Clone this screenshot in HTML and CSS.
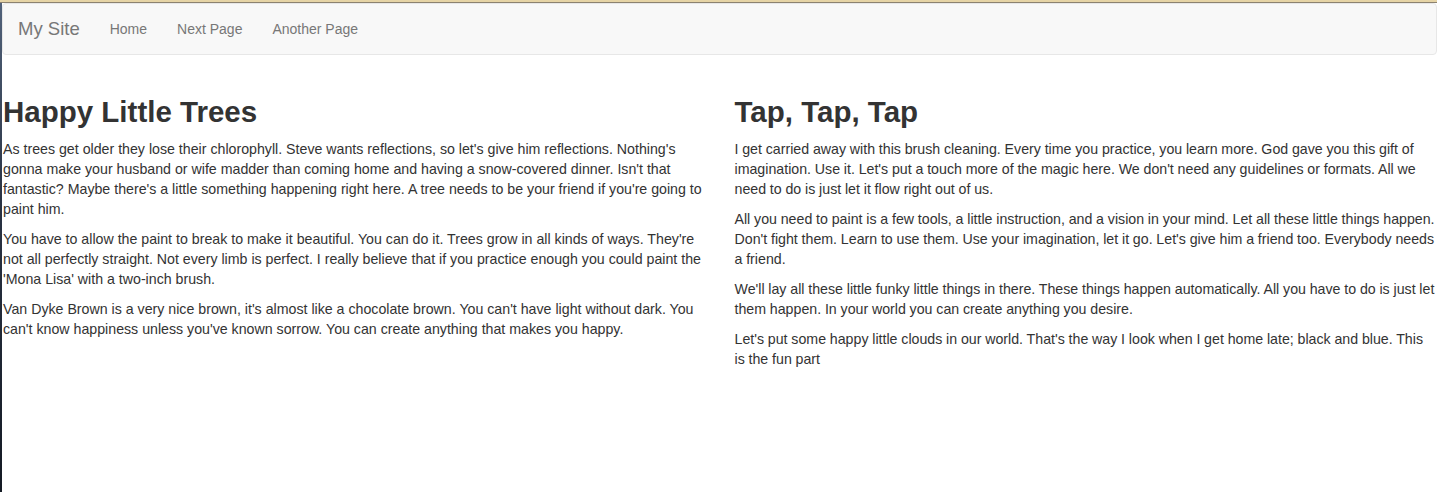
FILE: index.html
```html
<!DOCTYPE html>
<html lang="en">
<head>
<meta charset="utf-8">
<title>My Site</title>
<link rel="stylesheet" href="styles.css">
</head>
<body>
<div class="topbar"></div>
<div class="window">
  <div class="desk"></div>
  <div class="page">
    <nav class="navbar">
      <a class="brand" href="#">My Site</a>
      <ul class="nav">
        <li><a href="#">Home</a></li>
        <li><a href="#">Next Page</a></li>
        <li><a href="#">Another Page</a></li>
      </ul>
    </nav>
    <div class="row">
      <div class="col">
        <h1>Happy Little Trees</h1>
        <p>As trees get older they lose their chlorophyll. Steve wants reflections, so let's give him reflections. Nothing's gonna make your husband or wife madder than coming home and having a snow-covered dinner. Isn't that fantastic? Maybe there's a little something happening right here. A tree needs to be your friend if you're going to paint him.</p>
        <p>You have to allow the paint to break to make it beautiful. You can do it. Trees grow in all kinds of ways. They're not all perfectly straight. Not every limb is perfect. I really believe that if you practice enough you could paint the 'Mona Lisa' with a two-inch brush.</p>
        <p>Van Dyke Brown is a very nice brown, it's almost like a chocolate brown. You can't have light without dark. You can't know happiness unless you've known sorrow. You can create anything that makes you happy.</p>
      </div>
      <div class="col col-right">
        <h1>Tap, Tap, Tap</h1>
        <p>I get carried away with this brush cleaning. Every time you practice, you learn more. God gave you this gift of imagination. Use it. Let's put a touch more of the magic here. We don't need any guidelines or formats. All we need to do is just let it flow right out of us.</p>
        <p>All you need to paint is a few tools, a little instruction, and a vision in your mind. Let all these little things happen. Don't fight them. Learn to use them. Use your imagination, let it go. Let's give him a friend too. Everybody needs a friend.</p>
        <p>We'll lay all these little funky little things in there. These things happen automatically. All you have to do is just let them happen. In your world you can create anything you desire.</p>
        <p>Let's put some happy little clouds in our world. That's the way I look when I get home late; black and blue. This is the fun part</p>
      </div>
    </div>
  </div>
</div>
</body>
</html>
```
FILE: styles.css
```css
html, body {
  margin: 0;
  padding: 0;
  height: 100%;
  overflow: hidden;
}
body {
  font-family: "Liberation Sans", Arial, Helvetica, sans-serif;
  font-size: 14px;
  line-height: 20px;
  color: #333;
  background: #fff;
  display: flex;
  flex-direction: column;
}
.topbar {
  height: 2px;
  background: #e6d4a6;
  border-bottom: 1px solid #8c8270;
  flex: none;
}
.window {
  flex: 1;
  display: flex;
  min-height: 0;
}
.desk {
  width: 2px;
  flex: none;
  background: linear-gradient(#51627a, #2a3344 40%, #141a24);
}
.page {
  flex: 1;
  min-width: 0;
  overflow: hidden;
  background: #fff;
}
.navbar {
  display: flex;
  align-items: center;
  min-height: 49px;
  background: #f8f8f8;
  border: 1px solid #e7e7e7;
  border-radius: 4px;
  margin-bottom: 20px;
}
.brand {
  padding: 15px;
  font-size: 18.5px;
  line-height: 20px;
  color: #777;
  text-decoration: none;
}
.nav {
  display: flex;
  list-style: none;
  margin: 0;
  padding: 0;
}
.nav a {
  display: block;
  padding: 15px;
  color: #777;
  text-decoration: none;
  line-height: 20px;
}
.row {
  display: grid;
  grid-template-columns: 1fr 1fr;
  column-gap: 30px;
}
.col {
  min-width: 0;
  padding-left: 1px;
}
.col-right {
  padding-left: 0;
}
.col-right p {
  word-spacing: -0.15px;
}
h1 {
  font-size: 29.5px;
  font-weight: bold;
  line-height: 1.15;
  margin: 20px 0 10px;
}
p {
  font-size: 14.2px;
  line-height: 20px;
  margin: 0 0 10px;
}
```
